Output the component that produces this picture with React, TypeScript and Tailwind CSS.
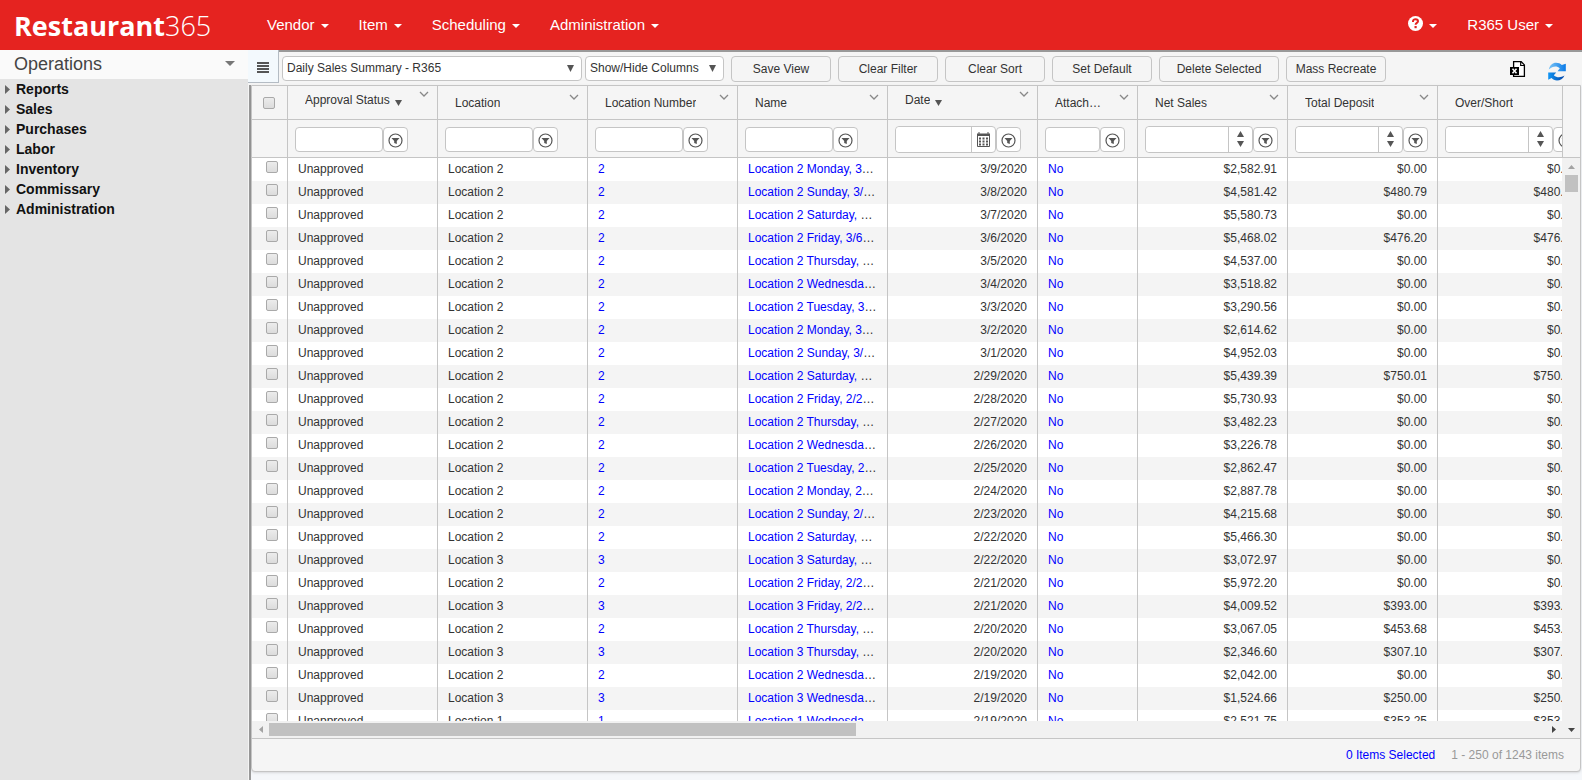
import type { ReactNode } from "react";
import clsx from "clsx";

const navItems = ["Vendor", "Item", "Scheduling", "Administration"];

const treeItems = ["Reports", "Sales", "Purchases", "Labor", "Inventory", "Commissary", "Administration"];

const buttons = [
    { label: "Save View", width: "w-[100px]" },
    { label: "Clear Filter", width: "w-[100px]" },
    { label: "Clear Sort", width: "w-[100px]" },
    { label: "Set Default", width: "w-[100px]" },
    { label: "Delete Selected", width: "w-[120px]" },
    { label: "Mass Recreate", width: "w-[100px]" },
];

type Column = { title: string; filter: "text" | "short" | "date" | "number"; sorted?: boolean };

const columns: Column[] = [
    { title: "Approval Status", filter: "text", sorted: true },
    { title: "Location", filter: "text" },
    { title: "Location Number", filter: "text" },
    { title: "Name", filter: "text" },
    { title: "Date", filter: "date", sorted: true },
    { title: "Attachments", filter: "short" },
    { title: "Net Sales", filter: "number" },
    { title: "Total Deposit", filter: "number" },
    { title: "Over/Short", filter: "number" },
];

// location, weekday, date, net sales, deposit
const rows: [number, string, string, string, string][] = [
    [2, "Monday", "3/9/2020", "$2,582.91", "$0.00"],
    [2, "Sunday", "3/8/2020", "$4,581.42", "$480.79"],
    [2, "Saturday", "3/7/2020", "$5,580.73", "$0.00"],
    [2, "Friday", "3/6/2020", "$5,468.02", "$476.20"],
    [2, "Thursday", "3/5/2020", "$4,537.00", "$0.00"],
    [2, "Wednesday", "3/4/2020", "$3,518.82", "$0.00"],
    [2, "Tuesday", "3/3/2020", "$3,290.56", "$0.00"],
    [2, "Monday", "3/2/2020", "$2,614.62", "$0.00"],
    [2, "Sunday", "3/1/2020", "$4,952.03", "$0.00"],
    [2, "Saturday", "2/29/2020", "$5,439.39", "$750.01"],
    [2, "Friday", "2/28/2020", "$5,730.93", "$0.00"],
    [2, "Thursday", "2/27/2020", "$3,482.23", "$0.00"],
    [2, "Wednesday", "2/26/2020", "$3,226.78", "$0.00"],
    [2, "Tuesday", "2/25/2020", "$2,862.47", "$0.00"],
    [2, "Monday", "2/24/2020", "$2,887.78", "$0.00"],
    [2, "Sunday", "2/23/2020", "$4,215.68", "$0.00"],
    [2, "Saturday", "2/22/2020", "$5,466.30", "$0.00"],
    [3, "Saturday", "2/22/2020", "$3,072.97", "$0.00"],
    [2, "Friday", "2/21/2020", "$5,972.20", "$0.00"],
    [3, "Friday", "2/21/2020", "$4,009.52", "$393.00"],
    [2, "Thursday", "2/20/2020", "$3,067.05", "$453.68"],
    [3, "Thursday", "2/20/2020", "$2,346.60", "$307.10"],
    [2, "Wednesday", "2/19/2020", "$2,042.00", "$0.00"],
    [3, "Wednesday", "2/19/2020", "$1,524.66", "$250.00"],
    [1, "Wednesday", "2/19/2020", "$2,521.75", "$353.25"],
];

const Triangle = ({ dir, className }: { dir: "up" | "down" | "left" | "right"; className: string }) => {
    const points = { up: "0,10 10,10 5,0", down: "0,0 10,0 5,10", left: "10,0 10,10 0,5", right: "0,0 0,10 10,5" };
    return (
        <svg viewBox="0 0 10 10" preserveAspectRatio="none" className={className} aria-hidden="true">
            <polygon points={points[dir]} fill="currentColor" />
        </svg>
    );
};

const Checkbox = ({ label }: { label: string }) => (
    <input
        type="checkbox"
        aria-label={label}
        className="block h-3 w-3 appearance-none rounded-[2px] border border-[#a9a9a9] bg-linear-to-b from-[#ececec] to-[#dcdcdc]"
    />
);

const FilterButton = ({ title }: { title: string }) => (
    <button aria-label={`Filter ${title}`} className="flex h-[25px] w-[25px] shrink-0 items-center justify-center rounded border border-[#c5c5c5] bg-white pt-[3px]">
        <svg viewBox="0 0 15 15" className="h-[15px] w-[15px]" aria-hidden="true">
            <circle cx="7.5" cy="7.5" r="6.5" fill="none" stroke="#555" strokeWidth="1.2" />
            <path d="M3.5 5h8L8.8 8v3l-2.6-1V8z" fill="#555" />
        </svg>
    </button>
);

const Filter = ({ column }: { column: Column }) => {
    const { title, filter } = column;
    if (filter === "text" || filter === "short") {
        return (
            <div className="flex items-center">
                <input
                    aria-label={title}
                    className={clsx("h-[25px] rounded border border-[#c5c5c5] bg-white px-1", filter === "text" ? "w-[88px]" : "w-[55px]")}
                />
                <FilterButton title={title} />
            </div>
        );
    }
    return (
        <div className="flex items-center">
            <div className={clsx("flex h-[27px] shrink-0 rounded border border-[#c5c5c5] bg-white", filter === "date" ? "w-[101px]" : "w-[108px]")}>
                <input aria-label={title} className="min-w-0 flex-1 rounded-l bg-white px-1" />
                {filter === "date" ? (
                    <button aria-label="Pick a date" className="flex w-6 shrink-0 items-center justify-center border-l border-[#c5c5c5]">
                        <svg viewBox="0 0 13 15" className="h-[15px] w-[13px]" aria-hidden="true">
                            <path d="M.5 2v12.5h12V2" fill="none" stroke="#555" />
                            <path d="M0 1.5h1.5V0h1v1.500h8V0h1v1.500H13V4H0z" fill="#555" />
                            <path d="M2 5.500h2v2H2zm3.500 0h2v2h-2zM9 5.500h2v2H9zm-7 3h2v2H2zm3.500 0h2v2h-2zm3.500 0h2v2H9zm-7 3h2v2H2zm3.500 0h2v2h-2zm3.500 0h2v2H9z" fill="#555" />
                        </svg>
                    </button>
                ) : (
                    <div className="flex w-6 shrink-0 flex-col items-center justify-center gap-1 border-l border-[#c5c5c5] text-[#555]">
                        <button aria-label="Increase">
                            <Triangle dir="up" className="h-[6px] w-[7px]" />
                        </button>
                        <button aria-label="Decrease">
                            <Triangle dir="down" className="h-[6px] w-[7px]" />
                        </button>
                    </div>
                )}
            </div>
            <FilterButton title={title} />
        </div>
    );
};

const GridColumns = () => (
    <colgroup>
        <col className="w-[35px]" />
        {columns.map((c) => (
            <col key={c.title} className={c.filter === "short" ? "w-[100px]" : "w-[150px]"} />
        ))}
    </colgroup>
);

const Cell = ({ right, children }: { right?: boolean; children: ReactNode }) => (
    <td className={clsx("truncate border-l border-[#c5c5c5] px-[10px] pb-[2px]", right && "text-right")}>{children}</td>
);

const CellLink = ({ children }: { children: ReactNode }) => (
    <a href="#" className="text-[#0000ff]">
        {children}
    </a>
);

const Dropdown = ({ label, value, className }: { label: string; value: string; className: string }) => (
    <div className={clsx("relative h-[26px]", className)}>
        <select aria-label={label} className="h-[25px] w-full appearance-none rounded border border-[#c5c5c5] bg-white pr-5 pb-[2px] pl-1 text-xs">
            <option>{value}</option>
        </select>
        <Triangle dir="down" className="pointer-events-none absolute top-[9px] right-2 h-[7px] w-[7px] text-[#555]" />
    </div>
);

const Header = () => (
    <header className="flex h-[50px] shrink-0 items-center justify-between bg-[#e52320] text-[15px] text-white">
        <div className="flex items-center">
            <a href="#" className="w-[267px] pt-px pl-[14px] font-['Open_Sans',sans-serif] text-[27px] leading-[50px] font-bold">
                Restaurant<span className="font-light">365</span>
            </a>
            <nav className="flex gap-[30px]">
                {navItems.map((item) => (
                    <button key={item} className="flex items-center gap-[6px]">
                        {item}
                        <Triangle dir="down" className="mt-[2px] h-1 w-2" />
                    </button>
                ))}
            </nav>
        </div>
        <div className="flex gap-[30px] pr-[29px]">
            <button aria-label="Help" className="flex items-center gap-[6px]">
                <svg viewBox="0 0 15 15" className="mb-[2px] h-[15px] w-[15px]" aria-hidden="true">
                    <circle cx="7.5" cy="7.500" r="7.500" fill="#fff" />
                    <path d="M5 6V5.300C5 3.900 6.100 3.300 7.500 3.300S10 4 10 5.300C10 7 7.600 6.800 7.600 8.800" fill="none" stroke="#e52320" strokeWidth="2" />
                    <path d="M6.500 10h2.200v2.200H6.500z" fill="#e52320" />
                </svg>
                <Triangle dir="down" className="mt-[2px] h-1 w-2" />
            </button>
            <button className="flex items-center gap-[6px]">
                R365 User
                <Triangle dir="down" className="mt-[2px] h-1 w-2" />
            </button>
        </div>
    </header>
);

const Sidebar = () => (
    <aside className="w-[248px] shrink-0 bg-[#e4e4e4]">
        <button className="flex h-[29px] w-full items-center justify-between bg-[#fafafa] pr-[13px] pb-[2px] pl-[14px] text-lg text-[#444]">
            Operations
            <Triangle dir="down" className="h-[5px] w-[10px] text-[#777]" />
        </button>
        <ul className="text-sm leading-5 font-bold text-[#111]">
            {treeItems.map((item) => (
                <li key={item}>
                    <a href="#" className="flex items-center gap-[6px] pl-[5px]">
                        <Triangle dir="right" className="h-[9px] w-[5px] text-[#666]" />
                        {item}
                    </a>
                </li>
            ))}
        </ul>
    </aside>
);

const Toolbar = () => (
    <div className="flex h-[35px] shrink-0">
        <button aria-label="Toggle menu" className="flex h-[33px] w-[31px] shrink-0 items-center justify-center border-r border-b border-[#b4bcc4] bg-[#f3f9fd] pt-[2px]">
            <svg viewBox="0 0 12 11" className="h-[11px] w-3" aria-hidden="true">
                <path d="M0 1h12M0 4h12M0 7h12M0 10h12" stroke="#555" strokeWidth="2" />
            </svg>
        </button>
        <div className="flex min-w-0 flex-1 items-center justify-between border-t-2 border-[#999] pt-1 pr-4 pb-[3px] pl-[3px]">
            <div className="flex shrink-0 gap-[7px]">
                <div className="flex gap-[3px]">
                    <Dropdown label="View" value="Daily Sales Summary - R365" className="w-[300px]" />
                    <Dropdown label="Columns" value="Show/Hide Columns" className="w-[139px]" />
                </div>
                {buttons.map(({ label, width }) => (
                    <button key={label} className={clsx("h-[26px] rounded border border-[#c5c5c5] bg-[#f5f5f5]", width)}>
                        {label}
                    </button>
                ))}
            </div>
            <div className="flex items-center gap-[22px]">
                <button aria-label="Export to Excel">
                    <svg viewBox="0 0 16 16" className="block h-4 w-4" aria-hidden="true">
                        <path d="M3.600 6V.7h7.600l3.200 3.200v11.400H3.600V13" fill="#fff" stroke="#000" strokeWidth="1.300" />
                        <path d="M10.700 1v3.500h3.500" fill="none" stroke="#000" strokeWidth="1.200" />
                        <path d="M0 6h9v8H0z" />
                        <path d="M2.500 7.800l4 4.400M6.500 7.800l-4 4.400" stroke="#fff" strokeWidth="1.500" />
                    </svg>
                </button>
                <button aria-label="Refresh" className="pt-1">
                    <svg viewBox="0 0 18 19" className="block h-[19px] w-[18px]" aria-hidden="true">
                        <defs>
                            <linearGradient id="refresh-top" x1="0" x2="1" y1="0" y2="0">
                                <stop offset="0" stopColor="#7cc4f5" />
                                <stop offset="1" stopColor="#0a7be8" />
                            </linearGradient>
                            <linearGradient id="refresh-bottom" x1="0" x2="1" y1="0" y2="0">
                                <stop offset="0" stopColor="#1296f5" />
                                <stop offset="1" stopColor="#0546a8" />
                            </linearGradient>
                        </defs>
                        <path d="M.8 7.500C2 3 4.500.8 8 .8c2.500 0 4.300.8 5.800 2.200L17.800 1.800v7.400H9.500L11.800 6.200C8.500 3.300 4.500 4.200.8 7.500z" fill="url(#refresh-top)" />
                        <path d="M16.500 13.500c-1.500 3.500-4.300 5-7.500 5-2.400 0-4.200-.9-5.400-2.400L.2 17.800v-7.400h8L5.800 13.200c3 2.700 7 2.600 10.700.3z" fill="url(#refresh-bottom)" />
                    </svg>
                </button>
            </div>
        </div>
    </div>
);

const GridHead = () => (
    <div className="flex shrink-0 border-b border-[#c5c5c5]">
        <div className="min-w-0 flex-1 overflow-hidden">
            <table className="w-[1335px] table-fixed border-separate border-spacing-0">
                <GridColumns />
                <thead>
                    <tr className="h-[34px]">
                        <th className="border-b border-[#c5c5c5] pl-[11px]">
                            <Checkbox label="Select all" />
                        </th>
                        {columns.map(({ title, sorted }) => (
                            <th key={title} className="border-b border-l border-[#c5c5c5] p-0 font-normal">
                                <div className={clsx("flex items-center pr-2 pl-[17px]", sorted && "pb-[6px]")}>
                                    <a href="#" className="truncate">
                                        {title}
                                    </a>
                                    {sorted && <Triangle dir="down" className="mt-[6px] ml-[5px] h-[6px] w-[7px] shrink-0 text-[#555]" />}
                                    <button aria-label={`${title} menu`} className={clsx("ml-auto shrink-0 pb-3", title === "Attachments" && "pl-4")}>
                                        <svg viewBox="0 0 10 6" className="block h-[6px] w-[10px]" aria-hidden="true">
                                            <path d="M1 1l4 4 4-4" fill="none" stroke="#888" strokeWidth="1.300" />
                                        </svg>
                                    </button>
                                </div>
                            </th>
                        ))}
                    </tr>
                    <tr className="h-[37px]">
                        <td />
                        {columns.map((column) => (
                            <td key={column.title} className="border-l border-[#c5c5c5] p-0 pt-px pl-[7px]">
                                <Filter column={column} />
                            </td>
                        ))}
                    </tr>
                </thead>
            </table>
        </div>
        <div className="w-[18px] shrink-0 border-l border-[#c5c5c5]" />
    </div>
);

const GridBody = () => (
    <div className="flex min-h-0 flex-1">
        <div className="min-w-0 flex-1 overflow-hidden bg-white">
            <table className="w-[1335px] table-fixed border-separate border-spacing-0">
                <GridColumns />
                <tbody>
                    {rows.map(([location, day, date, sales, deposit], i) => (
                        <tr key={i} className="h-[23px] even:bg-[#f4f4f4]">
                            <td className="p-0 pb-[5px] pl-[14px]">
                                <Checkbox label={`Select Location ${location} ${date}`} />
                            </td>
                            <Cell>Unapproved</Cell>
                            <Cell>Location {location}</Cell>
                            <Cell>
                                <CellLink>{location}</CellLink>
                            </Cell>
                            <Cell>
                                <CellLink>{`Location ${location} ${day}, ${date}`}</CellLink>
                            </Cell>
                            <Cell right>{date}</Cell>
                            <Cell>
                                <CellLink>No</CellLink>
                            </Cell>
                            <Cell right>{sales}</Cell>
                            <Cell right>{deposit}</Cell>
                            <Cell right>{deposit}</Cell>
                        </tr>
                    ))}
                </tbody>
            </table>
        </div>
        <div className="flex w-[18px] shrink-0 flex-col items-center bg-[#f1f1f1]">
            <div className="flex h-[17px] items-center">
                <Triangle dir="up" className="h-1 w-[7px] text-[#a3a3a3]" />
            </div>
            <div className="h-[17px] w-[13px] bg-[#c1c1c1]" />
        </div>
    </div>
);

const App = () => {
    return (
        <div className="flex h-screen flex-col overflow-hidden bg-[#f5f7fa] font-['Liberation_Sans',Arial,sans-serif] text-xs text-[#333]">
            <Header />
            <div className="flex min-h-0 flex-1">
                <Sidebar />
                <main className="flex min-w-0 flex-1 flex-col bg-[#f5f5f5]">
                    <Toolbar />
                    <div className="ml-px flex min-h-0 flex-1 flex-col border-l-2 border-[#999] bg-[#f5f7fa] pr-px pb-[8px]">
                        <section className="flex min-h-0 flex-1 flex-col rounded-b border border-[#c5c5c5] bg-[#f5f5f5] shadow-sm">
                            <GridHead />
                            <GridBody />
                            <div className="flex h-[17px] shrink-0 items-center bg-[#f1f1f1]">
                                <div className="flex w-[17px] shrink-0 justify-center">
                                    <Triangle dir="left" className="h-[7px] w-1 text-[#a3a3a3]" />
                                </div>
                                <div className="flex-1">
                                    <div className="h-[13px] w-[46%] bg-[#c1c1c1]" />
                                </div>
                                <div className="flex w-[17px] shrink-0 justify-center">
                                    <Triangle dir="right" className="h-[7px] w-1 text-[#444]" />
                                </div>
                                <div className="flex w-[18px] shrink-0 justify-center">
                                    <Triangle dir="down" className="h-1 w-[7px] text-[#444]" />
                                </div>
                            </div>
                            <footer className="flex h-[33px] shrink-0 items-center justify-end gap-4 border-t border-[#c5c5c5] pr-4">
                                <a href="#" className="text-[#0000ff]">
                                    0 Items Selected
                                </a>
                                <span className="text-[#999]">1 - 250 of 1243 items</span>
                            </footer>
                        </section>
                    </div>
                </main>
            </div>
        </div>
    );
};

export default App;
